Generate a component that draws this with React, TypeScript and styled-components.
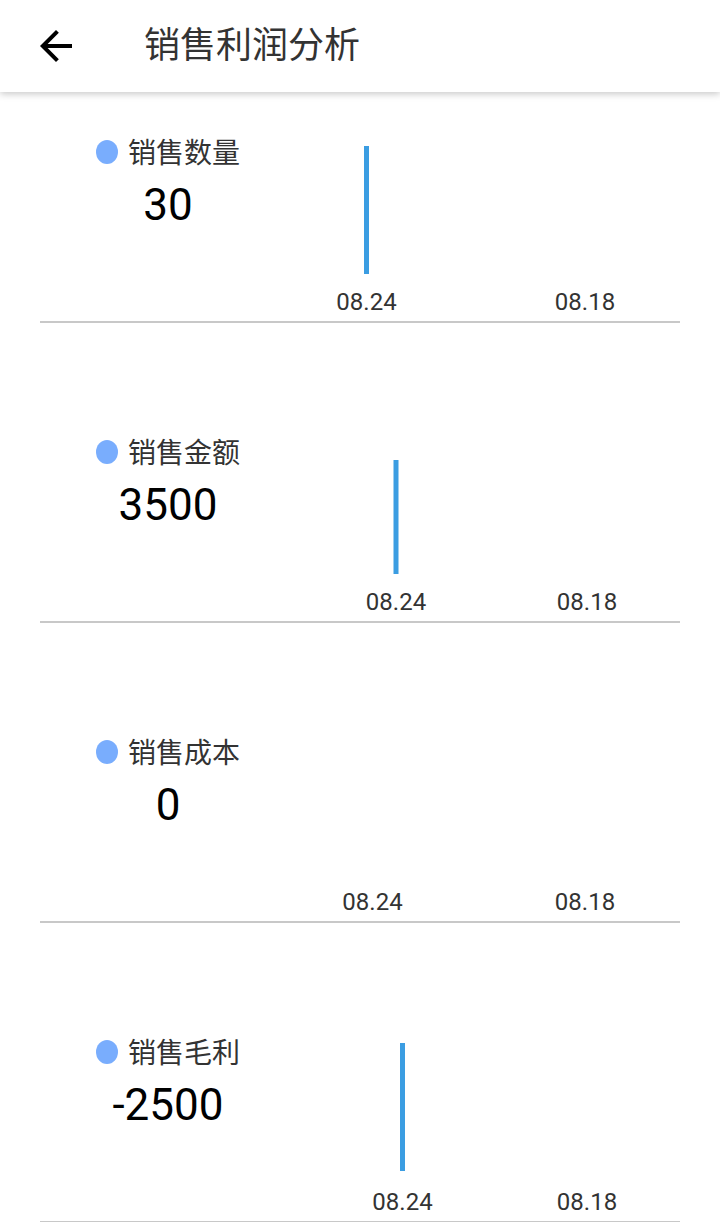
import React from 'react';
import styled, { createGlobalStyle } from 'styled-components';

const GlobalStyle = createGlobalStyle`
  * {
    margin: 0;
    padding: 0;
    box-sizing: border-box;
  }
  body {
    background: #ffffff;
    font-family: Roboto, "Noto Sans CJK SC", sans-serif;
  }
`;

const Page = styled.div`
  display: flex;
  flex-direction: column;
  width: 720px;
  background: #ffffff;
`;

const Header = styled.header`
  position: relative;
  z-index: 2;
  display: flex;
  align-items: center;
  gap: 64px;
  height: 92px;
  padding-left: 32px;
  background: #ffffff;
  box-shadow: 0 2px 7px rgba(0, 0, 0, 0.22);
`;

const BackButton = styled.button`
  display: flex;
  width: 48px;
  height: 48px;
  border: none;
  background: none;
  cursor: pointer;
`;

const Title = styled.h1`
  font-size: 36px;
  font-weight: 400;
  color: #333333;
  line-height: 44px;
`;

const Card = styled.section<{ $height: number }>`
  display: flex;
  flex-direction: column;
  justify-content: flex-end;
  height: ${(p) => p.$height}px;
  margin: 0 40px;
  overflow: hidden;
  border-bottom: 2px solid #c8c8c8;
`;

const CardBody = styled.div`
  display: flex;
  flex-shrink: 0;
  height: 298px;
`;

const Summary = styled.div`
  display: flex;
  flex-direction: column;
  width: 144px;
  margin-left: 56px;
  padding-top: 113px;
`;

const Legend = styled.div`
  display: flex;
  align-items: center;
  gap: 10px;
  height: 32px;
`;

const Dot = styled.span`
  width: 24px;
  height: 24px;
  border-radius: 50%;
  background: #79adfd;
`;

const LegendText = styled.span`
  padding-top: 4px;
  font-size: 28px;
  line-height: 32px;
  color: #333333;
  white-space: nowrap;
`;

const Value = styled.div`
  margin-top: 15px;
  font-size: 44px;
  line-height: 44px;
  color: #000000;
  text-align: center;
  white-space: nowrap;
`;

const Chart = styled.svg`
  display: block;
  flex-shrink: 0;
`;

type Row = {
  title: string;
  value: string;
  height: number;
  tickA: number;
  tickB: number;
  bar?: [number, number];
};

const rows: Row[] = [
  { title: '销售数量', value: '30', height: 231, tickA: 126.5, tickB: 345, bar: [123, 251] },
  { title: '销售金额', value: '3500', height: 300, tickA: 156, tickB: 347, bar: [137, 251] },
  { title: '销售成本', value: '0', height: 300, tickA: 132.5, tickB: 345 },
  { title: '销售毛利', value: '-2500', height: 300, tickA: 162.5, tickB: 347, bar: [120, 248] },
];

const App: React.FC = () => {
  return (
    <Page>
      <GlobalStyle />
      <Header>
        <BackButton aria-label="返回">
          <svg width="48" height="48" viewBox="0 0 24 24">
            <path d="M20 11H7.83l5.59-5.59L12 4l-8 8 8 8 1.41-1.41L7.83 13H20v-2z" fill="#000000" />
          </svg>
        </BackButton>
        <Title>销售利润分析</Title>
      </Header>

      {rows.map((r) => (
        <Card key={r.title} $height={r.height}>
          <CardBody>
            <Summary>
              <Legend>
                <Dot />
                <LegendText>{r.title}</LegendText>
              </Legend>
              <Value>{r.value}</Value>
            </Summary>
            <Chart width="440" height="298" viewBox="0 0 440 298">
              {r.bar && (
                <rect x={r.tickA - 2.5} y={r.bar[0]} width="5" height={r.bar[1] - r.bar[0]} fill="#3b9de2" />
              )}
              <g fontFamily="Roboto, sans-serif" fontSize="24" fill="#333333" textAnchor="middle">
                <text x={r.tickA} y="287">08.24</text>
                <text x={r.tickB} y="287">08.18</text>
              </g>
            </Chart>
          </CardBody>
        </Card>
      ))}
    </Page>
  );
};

export default App;
